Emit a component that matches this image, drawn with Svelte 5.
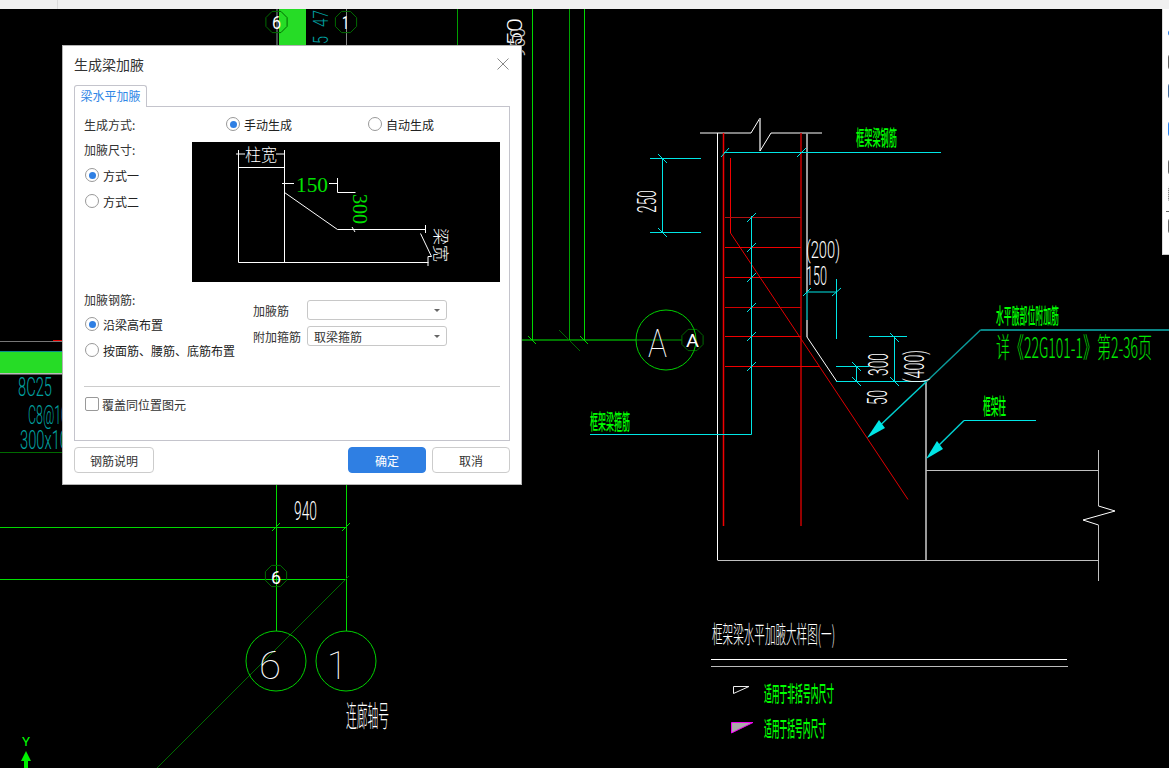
<script>
  // CAD layer: page coordinates, [x1, y1, x2, y2, colour, width]
  const G = '#00d800';
  const GD = '#00a000';
  const GK = '#006a00';
  const C = '#00e6e6';
  const R = '#f00000';
  const RD = '#c80000';
  const W = '#ffffff';
  const L = '#c0c0c0';
  const M = '#999999';
  const T = '#00a0a0';
  const LB = '#00ff00';

  const lines = [
    // axis lines left of the detail
    [277, 9, 277, 45, '#8a9a9a', 1], [346.5, 9, 346.5, 45, '#888', 1], [457.5, 9, 457.5, 45, GD, 1],
    [532.5, 9, 532.5, 340, G, 1], [569.5, 9, 569.5, 340, GD, 1], [584.5, 9, 584.5, 340, G, 1],
    [522, 340, 636, 340, '#00f000', 1], [636, 340, 682, 340, GD, 1],
    [528, 336, 536, 344, G, 1], [559, 330, 580, 351, GK, 1], [580, 336, 588, 344, G, 1],
    [276.5, 485, 276.5, 631, G, 1], [346.5, 485, 346.5, 631, G, 1],
    [0, 527.5, 346.5, 527.5, G, 1], [272, 531, 280, 523, G, 1], [342, 531, 350, 523, G, 1],
    [0, 579.5, 346.5, 579.5, '#00e000', 1],
    [349, 576, 157, 768, GK, 1],
    [0, 452.5, 62, 452.5, GK, 1],
    // beam outline
    [700, 133, 751, 133, W, 1], [751, 133, 760, 118, W, 1], [760, 118, 760, 151, M, 2], [760, 151, 771, 133, W, 1], [771, 133, 822, 133, W, 1],
    [717.5, 133, 717.5, 560, W, 1], [717.5, 560.5, 1098, 560.5, L, 1],
    [807, 133, 807, 292, M, 2], [807, 292, 807, 320, '#087f7f', 2], [807, 320, 807, 337, M, 2],
    [807, 337, 836.5, 381, W, 1],
    [926, 381, 926, 560, M, 2],
    [926, 470.5, 1098, 470.5, L, 1],
    [1098.5, 450, 1098.5, 506, L, 1], [1098.5, 506, 1115, 511, W, 1], [1115, 511, 1083, 520, W, 1], [1083, 520, 1098.5, 525, W, 1], [1098.5, 525, 1098.5, 581, L, 1],
    // rebar
    [723.5, 133, 723.5, 526, R, 1.5], [801, 133, 801, 526, RD, 1.5],
    [730.5, 158, 730.5, 233, R, 1], [730.5, 233, 908, 499.5, '#e00000', 1],
    [725, 217.5, 801, 217.5, '#b01010', 1], [725, 247.5, 801, 247.5, R, 1], [725, 277.5, 801, 277.5, R, 1],
    [725, 307.5, 801, 307.5, '#d00000', 1], [725, 336.5, 801, 336.5, R, 1], [725, 366.5, 820, 366.5, R, 1],
    // cyan dimensions and leaders
    [724, 152.5, 941, 152.5, C, 1], [721, 157, 729, 148, C, 1], [797, 157, 806, 148, C, 1],
    [650, 158.5, 701, 158.5, C, 1], [650, 232.5, 701, 232.5, C, 1], [662.5, 158, 662.5, 233, C, 1],
    [658, 154, 667, 163, C, 1], [658, 228, 667, 237, C, 1],
    [751.5, 216, 751.5, 434.5, C, 1], [590, 434.5, 751.5, 434.5, C, 1],
    [747, 222, 756, 213, C, 1], [747, 252, 756, 243, C, 1], [747, 282, 756, 273, C, 1], [747, 312, 756, 303, C, 1], [747, 341, 756, 332, C, 1], [747, 371, 756, 362, C, 1],
    [807, 292, 836.5, 292, C, 1], [836.5, 279, 836.5, 339, C, 1], [803, 296, 811, 288, C, 1], [832, 296, 841, 288, C, 1],
    [836, 381.5, 926, 381.5, C, 1], [836, 366.5, 869, 366.5, C, 1], [869, 336.5, 907, 336.5, C, 1],
    [856.5, 366, 856.5, 381, C, 1], [894.5, 336, 894.5, 381, C, 1],
    [852, 362, 861, 371, C, 1], [852, 377, 861, 386, C, 1], [890, 333, 899, 342, C, 1], [890, 377, 899, 386, C, 1],
    [980.5, 330, 1169, 330, '#0a8585', 2], [980.5, 330, 926, 382, '#0a9a9a', 1.5], [926, 382, 872, 433, '#00d0d0', 1.5],
    [964, 420.5, 1036, 420.5, C, 1], [964, 420.5, 932, 452, '#00d0d0', 1.5]
  ];

  // CAD text is stretched to its measured width: s is the font size, w the width, r the rotation
  const latin = [
    { t: '6', x: 272, y: 29, s: 19, w: 9, fill: W, solid: true },
    { t: '1', x: 342, y: 29, s: 19, w: 7, fill: W, solid: true },
    { t: '47', x: 328, y: 27, s: 21, w: 17, fill: T, r: -90 },
    { t: '5', x: 328, y: 44, s: 21, w: 8, fill: T, r: -90 },
    { t: '150', x: 522, y: 60, s: 21, w: 42, fill: W, r: -90 },
    { t: '950', x: 525, y: 58, s: 21, w: 30, fill: '#ccc', r: -90 },
    { t: '8C25', x: 18, y: 396, s: 26, w: 34, fill: T },
    { t: 'C8@10', x: 28, y: 424, s: 26, w: 40, fill: T },
    { t: '300x10', x: 20, y: 449, s: 26, w: 48, fill: T },
    { t: '250', x: 656, y: 213, s: 26, w: 23, fill: W, r: -90 },
    { t: '(200)', x: 806, y: 258, s: 23, w: 34, fill: W },
    { t: '150', x: 806, y: 285, s: 25, w: 21, fill: W },
    { t: '300', x: 888, y: 376, s: 27, w: 23, fill: W, r: -90 },
    { t: '50', x: 887, y: 405, s: 27, w: 15, fill: W, r: -90 },
    { t: '(400)', x: 924, y: 383, s: 27, w: 33, fill: W, r: -90 },
    { t: '940', x: 294, y: 520, s: 25, w: 23, fill: W },
    { t: '6', x: 271, y: 584, s: 18, w: 10, fill: W, solid: true },
    { t: '6', x: 259, y: 679, s: 38, w: 22, fill: W, thin: true },
    { t: '1', x: 327, y: 679, s: 38, w: 20, fill: W, thin: true },
    { t: 'A', x: 648, y: 357, s: 38, w: 19, fill: W, thin: true },
    { t: 'A', x: 686, y: 347, s: 19, w: 13, fill: W, solid: true },
    { t: 'Y', x: 22, y: 746, s: 12, w: 8, fill: LB, solid: true }
  ];
  const cjk = [
    { t: '框架梁钢筋', x: 856, y: 145, s: 21, w: 41, fill: LB },
    { t: '框架梁箍筋', x: 590, y: 429, s: 21, w: 40, fill: LB },
    { t: '水平腋部位附加筋', x: 996, y: 323, s: 21, w: 63, fill: LB },
    { t: '详《22G101-1》第2-36页', x: 996, y: 358, s: 28, w: 156, fill: '#00e800', thin: true },
    { t: '框架柱', x: 983, y: 414, s: 22, w: 23, fill: LB },
    { t: '框架梁水平加腋大样图(一)', x: 712, y: 643, s: 24, w: 123, fill: W, thin: true },
    { t: '适用于非括号内尺寸', x: 764, y: 701, s: 21, w: 70, fill: LB },
    { t: '适用于括号内尺寸', x: 764, y: 736, s: 21, w: 62, fill: LB },
    { t: '连廊轴号', x: 346, y: 727, s: 29, w: 43, fill: W, thin: true }
  ];

  const octagons = [[276.5, 22], [346, 22], [692.5, 340], [276, 576]];
  function octagon(cx, cy, r) {
    const pts = [];
    for (let i = 0; i < 8; i++) {
      const a = Math.PI / 8 + (i * Math.PI) / 4;
      pts.push(`${(cx + r * Math.cos(a)).toFixed(1)},${(cy + r * Math.sin(a)).toFixed(1)}`);
    }
    return pts.join(' ');
  }
  const rot = (n) => (n.r ? `rotate(${n.r} ${n.x} ${n.y})` : undefined);
</script>

<div class="page">
  <div class="topbar"><span class="topbar-seg"></span></div>

  <div class="canvas">
    <svg class="cad" width="1169" height="759" viewBox="0 9 1169 759">
      <!-- filled beams -->
      <rect x="279" y="9" width="27" height="36" fill="#26dc26" />
      <rect x="0" y="352" width="62" height="21" fill="#26dc26" />
      <rect x="0" y="341" width="62" height="1" fill="#777" />
      <rect x="53" y="340" width="9" height="1" fill="#e00000" />
      <rect x="0" y="351" width="62" height="1" fill="#0a8a8a" />
      <rect x="0" y="373" width="62" height="1.5" fill="#bbb" />

      {#each lines as [x1, y1, x2, y2, color, width]}
        <line {x1} {y1} {x2} {y2} stroke={color} stroke-width={width} />
      {/each}

      {#each octagons as [cx, cy]}
        <polygon points={octagon(cx, cy, 11.5)} fill="none" stroke={GK} />
      {/each}
      <circle cx="666" cy="340" r="30" fill="none" stroke="#00d000" />
      <circle cx="276" cy="661" r="30" fill="none" stroke="#00d000" />
      <circle cx="346" cy="661" r="30" fill="none" stroke="#00d000" />

      <!-- leader arrows -->
      <polygon points="867,438 879,420 885,428" fill="#00e6e6" />
      <polygon points="926,459 937,441 943,449" fill="#00e6e6" />

      <!-- drawing title rules and legend -->
      <line x1="711" y1="659.5" x2="1067" y2="659.5" stroke="#fff" />
      <line x1="711" y1="666.5" x2="1068" y2="666.5" stroke="#bbb" />
      <polygon points="733.5,686.5 749,686.5 733.5,693.5" fill="none" stroke="#eee" />
      <polygon points="731.5,722.5 753,722.5 731.5,733" fill="#aaa" stroke="#f000f0" />

      <!-- UCS marker -->
      <polygon points="26,751 31,761 21,761" fill="#00f000" />
      <rect x="24" y="761" width="4" height="7" fill="#00f000" />

      {#each latin as n}
        <text class="cad-latin" class:solid={n.solid} class:thin={n.thin} x={n.x} y={n.y} font-size={n.s} fill={n.fill} textLength={n.w} lengthAdjust="spacingAndGlyphs" transform={rot(n)}>{n.t}</text>
      {/each}
      {#each cjk as n}
        <text class="cad-cjk" class:thin={n.thin} x={n.x} y={n.y} font-size={n.s} fill={n.fill} textLength={n.w} lengthAdjust="spacingAndGlyphs">{n.t}</text>
      {/each}
    </svg>

    <div class="side">
      <span class="side-icon drop"></span>
      <span class="side-icon"></span>
      <span class="side-icon bluish"></span>
      <span class="side-icon blue"></span>
      <span class="side-icon lower"></span>
      <span class="side-icon dotted"></span>
      <span class="side-rule"></span>
      <span class="side-icon"></span>
    </div>

    <div class="dialog">
      <div class="title">
        <span>生成梁加腋</span>
        <svg class="close" width="12" height="12" viewBox="0 0 12 12">
          <path d="M.5.5l11 11M11.5.5l-11 11" stroke="#888" fill="none" />
        </svg>
      </div>

      <div class="tabs"><span class="tab">梁水平加腋</span></div>

      <div class="panel">
        <div class="mode-row">
          <span>生成方式:</span>
          <label class="radio-item"><span class="radio on"></span>手动生成</label>
          <label class="radio-item"><span class="radio"></span>自动生成</label>
        </div>

        <div class="size-row">
          <div class="size-left">
            <div class="group-label">加腋尺寸:</div>
            <label class="radio-item tall"><span class="radio on"></span>方式一</label>
            <label class="radio-item tall"><span class="radio"></span>方式二</label>
          </div>
          <svg class="preview" width="308" height="140" viewBox="0 0 308 140">
            <g fill="none" stroke="#fff">
              <path d="M46.5 8v112.5M92.5 8v112.5M46.5 25.500h46M46.500 120.500h190" />
              <path d="M44 12h9M84 12h9M90 41.500h12M137 41.500h9" />
              <path d="M145.500 36v14.500h18M92.500 50.500L145.500 87.500H233M233.500 83v8M228.500 91.500l11 23h-3.500v9.500" />
              <path d="M160 85l3 5" />
            </g>
            <text class="pv-cjk" x="53" y="19" font-size="17" fill="#fff" textLength="32" lengthAdjust="spacingAndGlyphs">柱宽</text>
            <text class="pv-num" x="104" y="50" font-size="21" fill="#00e000" textLength="32" lengthAdjust="spacingAndGlyphs">150</text>
            <text class="pv-num" x="161" y="52" font-size="21" fill="#00e000" textLength="30" lengthAdjust="spacingAndGlyphs" transform="rotate(90 161 52)">300</text>
            <text class="pv-cjk" x="243" y="102" font-size="16" fill="#fff" transform="rotate(90 243 102) translate(-16 0)" textLength="34" lengthAdjust="spacingAndGlyphs">梁宽</text>
          </svg>
        </div>

        <div class="rebar-row">
          <div class="rebar-left">
            <div class="group-label">加腋钢筋:</div>
            <label class="radio-item tall"><span class="radio on"></span>沿梁高布置</label>
            <label class="radio-item tall"><span class="radio"></span>按面筋、腰筋、底筋布置</label>
          </div>
          <div class="rebar-right">
            <div class="field">
              <span class="field-label">加腋筋</span>
              <span class="select"><span></span><i class="caret"></i></span>
            </div>
            <div class="field">
              <span class="field-label">附加箍筋</span>
              <span class="select"><span>取梁箍筋</span><i class="caret"></i></span>
            </div>
          </div>
        </div>

        <div class="divider"></div>

        <label class="check-item"><span class="check"></span>覆盖同位置图元</label>
      </div>

      <div class="footer">
        <button class="btn wide">钢筋说明</button>
        <div class="footer-right">
          <button class="btn primary">确定</button>
          <button class="btn">取消</button>
        </div>
      </div>
    </div>
  </div>
</div>

<style>
  :global(body) {
    margin: 0;
    background: #000;
  }

  .page {
    width: 1169px;
    height: 768px;
    display: flex;
    flex-direction: column;
    overflow: hidden;
    font-family: "Noto Sans CJK SC", "Liberation Sans", sans-serif;
    font-size: 12px;
    color: #333;
  }

  .topbar {
    height: 9px;
    background: #f0f0f0;
    flex: none;
  }
  .topbar-seg {
    display: block;
    width: 57px;
    height: 9px;
    border-right: 1px solid #dcdcdc;
  }

  .canvas {
    position: relative;
    flex: 1;
    background: #000;
  }
  .cad {
    display: block;
  }
  .cad-latin {
    font-family: Roboto, "Liberation Sans", sans-serif;
    font-weight: 300;
  }
  .cad-latin.solid {
    font-weight: 400;
  }
  .cad-latin.thin {
    font-weight: 100;
  }
  .cad-cjk {
    font-family: "Noto Sans CJK SC", sans-serif;
    font-weight: 500;
  }
  .cad-cjk.thin {
    font-weight: 300;
  }

  /* clipped tool palette at the window edge */
  .side {
    position: absolute;
    top: 0;
    right: 0;
    width: 7px;
    height: 246px;
    padding: 19px 0 0 5px;
    box-sizing: border-box;
    background: #fff;
    border-left: 1px solid #ddd;
    border-bottom: 1px solid #ccc;
    display: flex;
    flex-direction: column;
    gap: 13px;
    overflow: hidden;
  }
  .side-icon {
    width: 14px;
    height: 16px;
    box-sizing: border-box;
    border: 1px solid #666;
    border-radius: 3px;
    flex: none;
  }
  .side-icon.drop {
    height: 10px;
    border-color: #2f7fe3;
    background: #2f7fe3;
    border-radius: 50%;
    margin-bottom: 3px;
  }
  .side-icon.bluish {
    border-color: #4a6f9c;
  }
  .side-icon.blue {
    border-color: #2f86f0;
    margin-top: 9px;
  }
  .side-icon.lower {
    margin-top: 9px;
  }
  .side-icon.dotted {
    border-style: dotted;
    margin-top: -2px;
  }
  .side-rule {
    width: 14px;
    height: 1px;
    background: #666;
    flex: none;
    margin: -4px 0 -7px -2px;
  }

  .dialog {
    position: absolute;
    left: 62px;
    top: 36px;
    width: 460px;
    height: 440px;
    box-sizing: border-box;
    padding: 0 11px;
    display: flex;
    flex-direction: column;
    background: #fff;
    border: 1px solid #b4b4b4;
  }

  .title {
    height: 39px;
    box-sizing: border-box;
    padding: 0 1px 3px 0;
    flex: none;
    display: flex;
    align-items: center;
    justify-content: space-between;
    font-size: 14px;
    color: #333;
  }

  .tabs {
    height: 22px;
    flex: none;
    display: flex;
    margin-bottom: -1px;
    position: relative;
  }
  .tab {
    width: 73px;
    box-sizing: border-box;
    height: 22px;
    text-align: center;
    line-height: 20px;
    color: #2f86e6;
    background: #fff;
    border: 1px solid #c4c4cc;
    border-bottom: none;
    border-radius: 3px 3px 0 0;
  }

  .panel {
    height: 335px;
    flex: none;
    box-sizing: border-box;
    padding: 7px 9px 0;
    border: 1px solid #c4c4cc;
  }

  .mode-row {
    display: grid;
    grid-template-columns: 142px 142px 1fr;
    height: 20px;
    align-items: center;
  }

  .radio-item {
    display: flex;
    align-items: center;
    gap: 4px;
    color: #222;
    white-space: nowrap;
  }
  .radio-item.tall {
    height: 26px;
    padding-left: 1px;
  }
  .radio {
    width: 14px;
    height: 14px;
    box-sizing: border-box;
    border: 1px solid #999;
    border-radius: 50%;
    background: #fff;
    flex: none;
    position: relative;
  }
  .radio.on::after {
    content: "";
    position: absolute;
    left: 2.5px;
    top: 2.5px;
    width: 7px;
    height: 7px;
    border-radius: 50%;
    background: #2f7fe3;
  }

  .size-row {
    display: flex;
    margin-top: 8px;
  }
  .size-left {
    width: 108px;
    flex: none;
  }
  .group-label {
    height: 16px;
    line-height: 16px;
    margin-bottom: 4px;
  }
  .rebar-left .group-label {
    margin-bottom: 3px;
  }
  .preview {
    display: block;
    background: #000;
  }
  .pv-cjk {
    font-family: "Noto Sans CJK SC", sans-serif;
    font-weight: 300;
  }
  .pv-num {
    font-family: "Liberation Serif", serif;
  }

  .rebar-row {
    display: flex;
    margin-top: 10px;
    height: 72px;
  }
  .rebar-left {
    width: 169px;
    flex: none;
  }
  .rebar-right {
    padding-top: 8px;
    display: flex;
    flex-direction: column;
    gap: 6px;
  }
  .field {
    display: flex;
    align-items: center;
    height: 20px;
  }
  .field-label {
    width: 54px;
    flex: none;
  }
  .select {
    width: 140px;
    height: 20px;
    box-sizing: border-box;
    padding: 0 6px;
    display: flex;
    align-items: center;
    justify-content: space-between;
    border: 1px solid #c8c8c8;
    border-radius: 3px;
    color: #333;
  }
  .caret {
    width: 0;
    height: 0;
    border-left: 3px solid transparent;
    border-right: 3px solid transparent;
    border-top: 3px solid #666;
  }

  .divider {
    height: 1px;
    background: #ccc;
    margin-top: 22px;
  }

  .check-item {
    display: flex;
    align-items: center;
    gap: 3px;
    height: 18px;
    margin-top: 8px;
    padding-left: 1px;
  }
  .check {
    width: 14px;
    height: 14px;
    box-sizing: border-box;
    border: 1px solid #999;
    border-radius: 2px;
  }

  .footer {
    display: flex;
    justify-content: space-between;
    margin-top: 6px;
  }
  .footer-right {
    display: flex;
    gap: 6px;
  }
  .btn {
    width: 78px;
    height: 26px;
    padding: 0;
    font: inherit;
    color: #333;
    background: #fff;
    border: 1px solid #ccc;
    border-radius: 4px;
  }
  .btn.wide {
    width: 80px;
  }
  .btn.primary {
    color: #fff;
    background: #2f7fe3;
    border-color: #2f7fe3;
  }
</style>
